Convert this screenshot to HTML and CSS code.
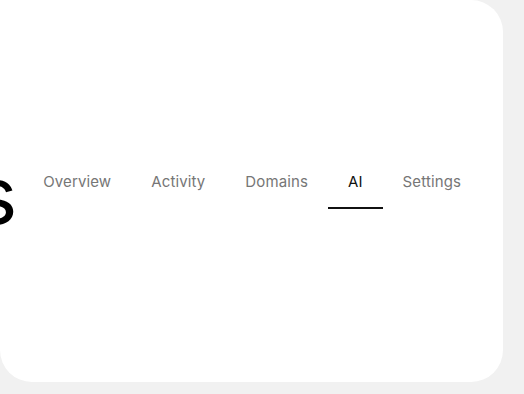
FILE: index.html
```html
<!DOCTYPE html>
<html lang="en">
<head>
    <meta charset="UTF-8">
    <meta name="viewport" content="width=device-width, initial-scale=1.0">
    <title>Project</title>
    <link rel="stylesheet" href="styles.css">
</head>
<body>
    <div class="card">
        <div class="header">
            <h1 class="title">Projects</h1>
            <nav class="tabs">
                <a class="tab" href="#">Overview</a>
                <a class="tab" href="#">Activity</a>
                <a class="tab" href="#">Domains</a>
                <a class="tab active" href="#">AI</a>
                <a class="tab" href="#">Settings</a>
            </nav>
        </div>
    </div>
</body>
</html>
```

FILE: styles.css
```css
html, body {
    height: 100%;
}
body {
    margin: 0;
    background: #f1f1f1;
    font-family: Inter, "Noto Sans", sans-serif;
    overflow: hidden;
}
.card {
    width: 503px;
    height: 382px;
    background: #fff;
    border-radius: 0 32px 32px 32px;
    overflow: hidden;
    display: flex;
    align-items: center;
    justify-content: flex-end;
}
.header {
    display: flex;
    align-items: center;
    justify-content: flex-end;
    padding-right: 22px;
}
.title {
    flex-shrink: 0;
    margin: 8px 7px 0 0;
    font-size: 80px;
    font-weight: 400;
    line-height: 80px;
    color: #000;
    letter-spacing: -1px;
}
.tabs {
    display: flex;
    flex-shrink: 0;
}
.tab {
    padding: 0 20px 16px;
    font-size: 15px;
    line-height: 18px;
    letter-spacing: 0.12px;
    color: #767676;
    text-decoration: none;
    border-bottom: 2px solid transparent;
}
.tab.active {
    color: #111;
    border-bottom-color: #111;
}
```
